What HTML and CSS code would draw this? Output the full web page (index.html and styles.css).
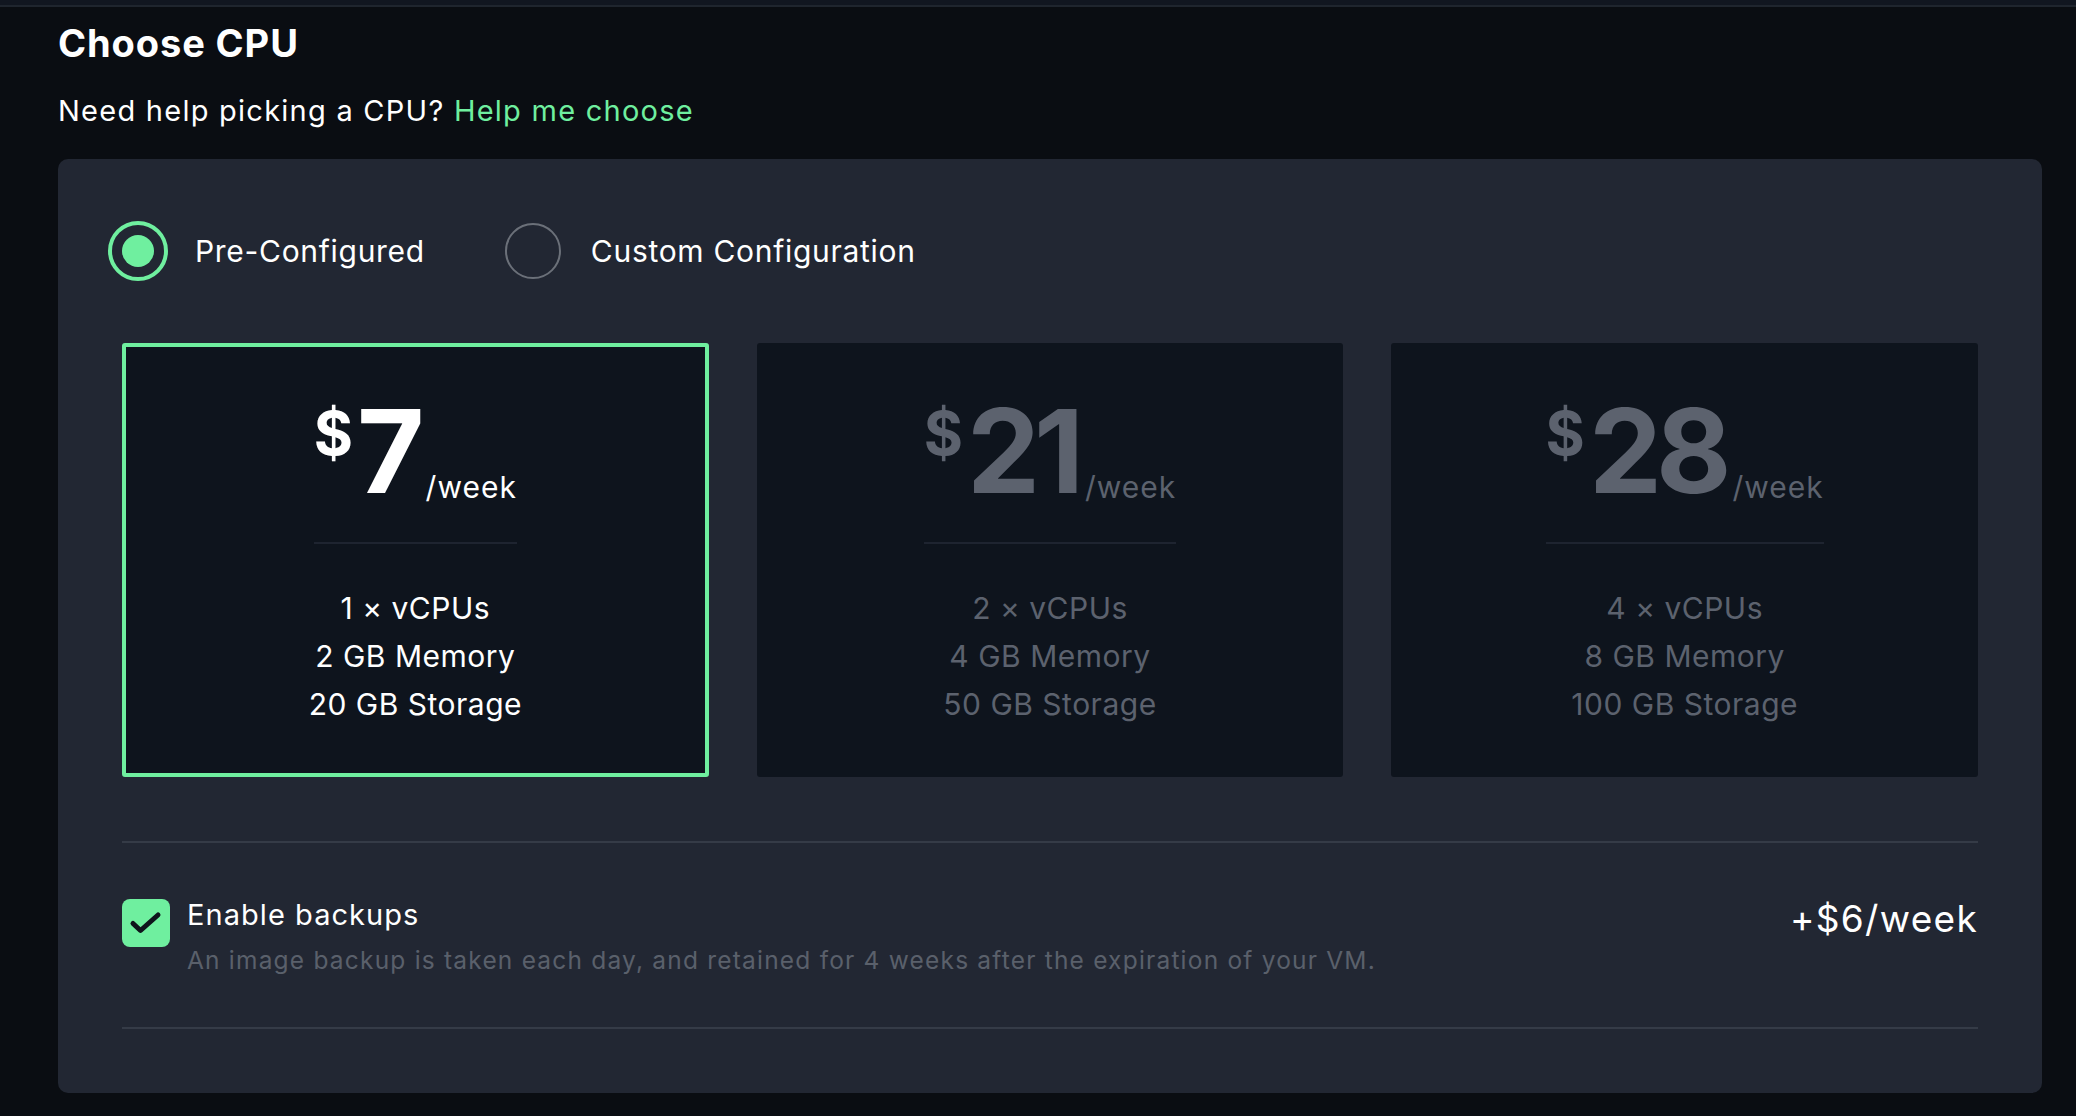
FILE: index.html
```html
<!DOCTYPE html>
<html lang="en">
<head>
<meta charset="utf-8">
<title>Choose CPU</title>
<link rel="stylesheet" href="styles.css">
</head>
<body>
<div class="topbar"></div>
<main class="page">
  <h1 class="title">Choose CPU</h1>
  <p class="help">Need help picking a CPU? <a class="link" href="#">Help me choose</a></p>
  <section class="panel">
    <div class="modes">
      <label class="mode"><span class="radio radio--on"></span><span class="mode-label">Pre-Configured</span></label>
      <label class="mode"><span class="radio"></span><span class="mode-label">Custom Configuration</span></label>
    </div>
    <div class="plans">
      <div class="plan plan--selected">
        <div class="price"><span class="cur">$</span><span class="amt">7</span><span class="per">/week</span></div>
        <ul class="specs">
          <li>1 × vCPUs</li>
          <li>2 GB Memory</li>
          <li>20 GB Storage</li>
        </ul>
      </div>
      <div class="plan plan--off">
        <div class="price"><span class="cur">$</span><span class="amt">21</span><span class="per">/week</span></div>
        <ul class="specs">
          <li>2 × vCPUs</li>
          <li>4 GB Memory</li>
          <li>50 GB Storage</li>
        </ul>
      </div>
      <div class="plan plan--off">
        <div class="price"><span class="cur">$</span><span class="amt">28</span><span class="per">/week</span></div>
        <ul class="specs">
          <li>4 × vCPUs</li>
          <li>8 GB Memory</li>
          <li>100 GB Storage</li>
        </ul>
      </div>
    </div>
    <div class="backup">
      <span class="check"><svg viewBox="0 0 48 48" width="48" height="48"><path d="M11 24.5 L18.5 31.5 L36 16" fill="none" stroke="#0f141c" stroke-width="5" stroke-linecap="round" stroke-linejoin="round"/></svg></span>
      <div class="backup-text">
        <div class="backup-title">Enable backups</div>
        <div class="backup-desc">An image backup is taken each day, and retained for 4 weeks after the expiration of your VM.</div>
      </div>
      <div class="backup-price">+$6/week</div>
    </div>
  </section>
</main>
</body>
</html>
```

FILE: styles.css
```css
* { box-sizing: border-box; }
html, body { margin: 0; padding: 0; }
body {
  background: #0a0d12;
  color: #ffffff;
  font-family: Inter, "Liberation Sans", sans-serif;
  width: 2076px;
  height: 1116px;
  overflow: hidden;
}
.topbar {
  height: 7px;
  background: #111620;
  border-bottom: 2px solid #1f252e;
}
.page {
  padding: 0 34px 0 58px;
}
.title {
  margin: 13px 0 0;
  font-size: 38px;
  line-height: 46px;
  font-weight: 700;
  letter-spacing: 0.9px;
}
.help {
  margin: 27px 0 0;
  font-size: 29px;
  line-height: 36px;
  letter-spacing: 1.25px;
}
.link {
  color: #6fef9f;
  text-decoration: none;
}
.panel {
  margin-top: 30px;
  background: #222733;
  border-radius: 10px;
  padding: 62px 64px 64px;
}
.modes {
  display: flex;
  align-items: center;
  gap: 78px;
  margin-left: -14px;
}
.mode {
  display: flex;
  align-items: center;
  gap: 27px;
  font-size: 30px;
  letter-spacing: 0.7px;
}
.radio {
  flex: none;
  width: 56px;
  height: 56px;
  margin: 2px 3px 2px 2px;
  border-radius: 50%;
  border: 2px solid #6b7079;
}
.radio--on {
  width: 60px;
  height: 60px;
  margin: 0;
  border: 4px solid #6fef9f;
  display: flex;
  align-items: center;
  justify-content: center;
}
.radio--on::after {
  content: "";
  width: 32px;
  height: 32px;
  border-radius: 50%;
  background: #6fef9f;
}
.plans {
  display: grid;
  grid-template-columns: repeat(3, 1fr);
  gap: 48px;
  margin-top: 62px;
}
.plan {
  background: #0e141d;
  border: 4px solid transparent;
  border-radius: 3px;
  padding: 46px 0 45px;
  text-align: center;
}
.plan--selected {
  border-color: #6fef9f;
}
.price {
  display: inline-flex;
  align-items: flex-start;
  padding-bottom: 33px;
  border-bottom: 2px solid #1e2430;
}
.cur {
  font-size: 60px;
  line-height: 60px;
  font-weight: 700;
  margin-top: 10px;
  margin-right: 4px;
}
.amt {
  font-size: 116px;
  line-height: 116px;
  font-weight: 700;
  letter-spacing: -6px;
}
.per {
  font-size: 30px;
  line-height: 30px;
  margin-top: 79px;
  margin-left: 7px;
  letter-spacing: 1px;
}
.specs {
  list-style: none;
  margin: 40px 0 0;
  padding: 0;
  font-size: 30px;
  line-height: 48px;
  letter-spacing: 0.5px;
}
.plan--off .price,
.plan--off .specs {
  color: #5c626e;
}
.backup {
  margin-top: 64px;
  border-top: 2px solid #353b47;
  border-bottom: 2px solid #353b47;
  padding: 54px 0 52px;
  display: flex;
  align-items: flex-start;
}
.check {
  flex: none;
  width: 48px;
  height: 48px;
  margin-top: 2px;
  margin-right: 17px;
  border-radius: 8px;
  background: #6fef9f;
}
.check svg { display: block; }
.backup-title {
  font-size: 29px;
  line-height: 36px;
  letter-spacing: 1.05px;
}
.backup-desc {
  margin-top: 12px;
  font-size: 24.5px;
  line-height: 30px;
  color: #5a606b;
  letter-spacing: 1.2px;
}
.backup-price {
  margin-left: auto;
  margin-top: 0;
  font-size: 37px;
  line-height: 44px;
  letter-spacing: 1.3px;
}
```
